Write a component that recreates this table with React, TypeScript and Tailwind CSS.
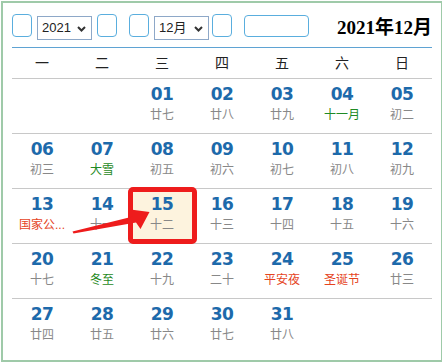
import React from "react";

type Day = { d: string; lunar: string; tone?: "green" | "red" } | null;

const weeks: Day[][] = [
  [
    null,
    null,
    { d: "01", lunar: "廿七" },
    { d: "02", lunar: "廿八" },
    { d: "03", lunar: "廿九" },
    { d: "04", lunar: "十一月", tone: "green" },
    { d: "05", lunar: "初二" },
  ],
  [
    { d: "06", lunar: "初三" },
    { d: "07", lunar: "大雪", tone: "green" },
    { d: "08", lunar: "初五" },
    { d: "09", lunar: "初六" },
    { d: "10", lunar: "初七" },
    { d: "11", lunar: "初八" },
    { d: "12", lunar: "初九" },
  ],
  [
    { d: "13", lunar: "国家公...", tone: "red" },
    { d: "14", lunar: "十一" },
    { d: "15", lunar: "十二" },
    { d: "16", lunar: "十三" },
    { d: "17", lunar: "十四" },
    { d: "18", lunar: "十五" },
    { d: "19", lunar: "十六" },
  ],
  [
    { d: "20", lunar: "十七" },
    { d: "21", lunar: "冬至", tone: "green" },
    { d: "22", lunar: "十九" },
    { d: "23", lunar: "二十" },
    { d: "24", lunar: "平安夜", tone: "red" },
    { d: "25", lunar: "圣诞节", tone: "red" },
    { d: "26", lunar: "廿三" },
  ],
  [
    { d: "27", lunar: "廿四" },
    { d: "28", lunar: "廿五" },
    { d: "29", lunar: "廿六" },
    { d: "30", lunar: "廿七" },
    { d: "31", lunar: "廿八" },
    null,
    null,
  ],
];

const weekdays = ["一", "二", "三", "四", "五", "六", "日"];

function NavBox({ className = "" }: { className?: string }) {
  return (
    <div
      className={`h-[23px] w-[20px] rounded-[4px] border border-[#5aaede] bg-white ${className}`}
    />
  );
}

function FakeSelect({ label }: { label: string }) {
  return (
    <div className="mt-[2px] flex h-[24px] w-[55px] items-center justify-between border border-[#8ea8c8] bg-white pl-[4px] pr-[5px] text-[13px] text-[#222]">
      <span>{label}</span>
      <svg width="9" height="6" viewBox="0 0 9 6" className="mt-[1px]">
        <path
          d="M1 1 L4.5 4.5 L8 1"
          fill="none"
          stroke="#333"
          strokeWidth="2"
        />
      </svg>
    </div>
  );
}

export default function App() {
  return (
    <div
      className="relative ml-[1px] mt-[1px] h-[361px] w-[442px] overflow-hidden border-2 border-[#9fcaa9] bg-white pl-[9px]"
      style={{ fontFamily: '"Liberation Sans", "Noto Sans CJK SC", sans-serif' }}
    >
      <div className="flex h-[45px] w-[420px] items-start border-b border-[#5fa3d3] pt-[11px]">
        <NavBox />
        <div className="ml-[5px]">
          <FakeSelect label="2021" />
        </div>
        <NavBox className="ml-[5px]" />
        <NavBox className="ml-[12px]" />
        <div className="ml-[5px]">
          <FakeSelect label="12月" />
        </div>
        <NavBox className="ml-[3px]" />
        <div className="ml-[12px] mt-[1px] h-[22px] w-[65px] rounded-[4px] border border-[#5aaede] bg-white" />
        <div
          className="ml-auto mt-[2px] text-[19px] font-bold leading-[24px] text-black"
          style={{ fontFamily: '"Liberation Serif", "Noto Sans CJK SC", serif' }}
        >
          2021年12月
        </div>
      </div>

      <div className="grid h-[31px] w-[420px] grid-cols-7 border-b border-[#c8c8c8]">
        {weekdays.map((w) => (
          <div
            key={w}
            className="flex items-center justify-center text-[14px] text-[#222]"
          >
            {w}
          </div>
        ))}
      </div>

      {weeks.map((week, i) => (
        <div
          key={i}
          className={`grid h-[55px] w-[420px] grid-cols-7 ${
            i < weeks.length - 1 ? "border-b border-[#c8c8c8]" : ""
          }`}
        >
          {week.map((day, j) => (
            <div
              key={j}
              className={`flex flex-col items-center pt-[5px] ${
                day?.d === "15" ? "bg-[#fdf3de]" : ""
              }`}
            >
              {day && (
                <>
                  <div
                    className="h-[20px] text-[17px] font-bold leading-[20px] tracking-[-0.5px] text-[#1d6aab]"
                    style={{ fontFamily: '"DejaVu Sans", Verdana, sans-serif' }}
                  >
                    {day.d}
                  </div>
                  <div
                    className={`mt-[3px] whitespace-nowrap text-[12px] leading-[16px] ${
                      day.tone === "green"
                        ? "text-[#1f8a24]"
                        : day.tone === "red"
                          ? "text-[#e5431d]"
                          : "text-[#888]"
                    }`}
                  >
                    {day.lunar}
                  </div>
                </>
              )}
            </div>
          ))}
        </div>
      ))}

      {/* annotation: red frame + arrow */}
      <div className="absolute left-[125px] top-[184px] h-[57px] w-[69px] rounded-[5px] border-[5px] border-[#ee1c1c]" />
      <svg
        className="pointer-events-none absolute left-[-3px] top-[-3px]"
        width="442"
        height="362"
        viewBox="0 0 442 362"
      >
        <polygon
          points="73.5,233.5 136,222.5 140.5,229 149.5,212 130.5,209.5 133,216.5 72.5,231.5"
          fill="#ee1c1c"
        />
      </svg>
    </div>
  );
}
